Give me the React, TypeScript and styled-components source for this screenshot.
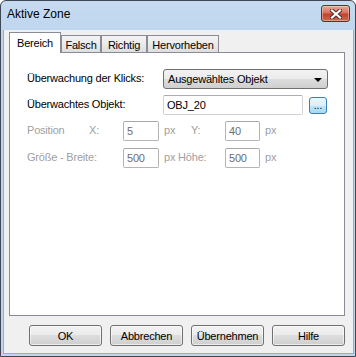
import styled, { createGlobalStyle } from 'styled-components';

const GlobalStyle = createGlobalStyle`
  body {
    margin: 0;
    background: #ffffff;
  }
  * {
    box-sizing: border-box;
  }
`;

const Window = styled.div`
  width: 356px;
  height: 357px;
  display: flex;
  flex-direction: column;
  border: 1px solid #3e4752;
  border-radius: 6px 6px 0 0;
  background: linear-gradient(#c6dbf1, #bcd4ed 40px, #bfd6ee);
  font-family: 'Liberation Sans', Arial, sans-serif;
  overflow: hidden;
`;

const TitleBar = styled.div`
  height: 29px;
  flex-shrink: 0;
  display: flex;
  justify-content: space-between;
  align-items: flex-start;
  padding: 0 5px 0 6px;
`;

const Title = styled.span`
  margin-top: 6px;
  font-size: 12px;
  line-height: 15px;
  color: #000;
`;

const CloseBtn = styled.div`
  margin-top: 4px;
  width: 29px;
  height: 17px;
  display: flex;
  align-items: center;
  justify-content: center;
  border: 1px solid #6e2a24;
  border-radius: 3px;
  background: linear-gradient(#eaa898, #d8705f 45%, #c5412c 55%, #d4674f);
  box-shadow: inset 0 0 0 1px rgba(255, 255, 255, 0.35);
`;

const Client = styled.div`
  flex: 1;
  margin: 0 1px 2px 2px;
  border: 1px solid #74bbe4;
  border-top: none;
  background: #f0f0f0;
  padding: 2px 8px 7px 5px;
  display: flex;
  flex-direction: column;
  font-size: 11px;
  letter-spacing: -0.2px;
  color: #000;
`;

const TabStrip = styled.div`
  height: 20px;
  display: flex;
  align-items: flex-end;
`;

const Tab = styled.div<{ active?: boolean; w: number }>`
  width: ${({ w }) => w}px;
  height: ${({ active }) => (active ? 21 : 17)}px;
  margin-bottom: ${({ active }) => (active ? -1 : 0)}px;
  position: relative;
  z-index: ${({ active }) => (active ? 1 : 0)};
  display: flex;
  align-items: center;
  justify-content: center;
  border: 1px solid #898c95;
  border-bottom: none;
  background: ${({ active }) =>
    active ? '#ffffff' : 'linear-gradient(#f3f3f3, #ebebeb 50%, #dedede)'};
  padding-top: ${({ active }) => (active ? 0 : 1)}px;
`;

const Panel = styled.div`
  width: 336px;
  height: 264px;
  border: 1px solid #898c95;
  background: #fff;
  padding: 16px 0 0 17px;
  display: flex;
  flex-direction: column;
`;

const Row = styled.div<{ top?: number }>`
  display: flex;
  align-items: center;
  height: 20px;
  margin-top: ${({ top }) => top ?? 0}px;
`;

const Label = styled.span<{ w: number; disabled?: boolean }>`
  width: ${({ w }) => w}px;
  flex-shrink: 0;
  color: ${({ disabled }) => (disabled ? '#a0a0a0' : '#000')};
  margin-top: -3px;
  white-space: nowrap;
`;

const Combo = styled.div`
  width: 165px;
  height: 20px;
  display: flex;
  align-items: center;
  justify-content: space-between;
  padding: 0 5px 0 4px;
  border: 1px solid #707070;
  border-radius: 3px;
  background: linear-gradient(#f2f2f2, #ebebeb 50%, #dddddd 50%, #cfcfcf);
`;

const Arrow = styled.span`
  width: 0;
  height: 0;
  border-left: 4px solid transparent;
  border-right: 4px solid transparent;
  border-top: 4px solid #000;
  margin-top: 1px;
`;

const TextBox = styled.div<{ w: number; disabled?: boolean }>`
  width: ${({ w }) => w}px;
  height: 20px;
  flex-shrink: 0;
  display: flex;
  align-items: center;
  padding-left: 3px;
  border: 1px solid ${({ disabled }) => (disabled ? '#b4b4b4' : '#cfd3d8')};
  border-top-color: ${({ disabled }) => (disabled ? '#a8a8a8' : '#abadb3')};
  border-radius: 2px;
  background: #fff;
  color: ${({ disabled }) => (disabled ? '#6d6d6d' : '#000')};
`;

const Browse = styled.div`
  width: 18px;
  height: 17px;
  margin-left: 6px;
  display: flex;
  align-items: flex-end;
  justify-content: center;
  padding-bottom: 2px;
  border: 1px solid #3c7fb1;
  border-radius: 3px;
  background: linear-gradient(#eaf6fd, #d9f0fc 50%, #bee6fd 50%, #a7d9f5);
  font-size: 10px;
  line-height: 10px;
  letter-spacing: 0;
`;

const Unit = styled.span<{ w?: number }>`
  width: ${({ w }) => (w ? `${w}px` : 'auto')};
  flex-shrink: 0;
  margin-left: 5px;
  margin-top: -3px;
  color: #a0a0a0;
  white-space: nowrap;
`;

const ButtonRow = styled.div`
  margin-top: 9px;
  display: flex;
  justify-content: flex-end;
  gap: 8px;
`;

const Button = styled.div`
  width: 73px;
  height: 21px;
  display: flex;
  align-items: center;
  justify-content: center;
  border: 1px solid #707070;
  border-radius: 3px;
  background: linear-gradient(#f2f2f2, #ebebeb 50%, #dddddd 50%, #cfcfcf);
  box-shadow: inset 0 0 0 1px rgba(255, 255, 255, 0.6);
`;

const CloseGlyph = () => (
  <svg width="12" height="10" viewBox="0 0 12 10">
    <path d="M2 1.5 L10 8.5 M10 1.5 L2 8.5" stroke="#4a2a2a" strokeWidth="4" strokeLinecap="square" />
    <path d="M2 1.5 L10 8.5 M10 1.5 L2 8.5" stroke="#ffffff" strokeWidth="2.2" strokeLinecap="square" />
  </svg>
);

const tabs = [
  { name: 'Bereich', w: 52 },
  { name: 'Falsch', w: 40 },
  { name: 'Richtig', w: 46 },
  { name: 'Hervorheben', w: 72 },
];

const buttons = ['OK', 'Abbrechen', 'Übernehmen', 'Hilfe'];

export default function App() {
  return (
    <>
      <GlobalStyle />
      <Window>
        <TitleBar>
          <Title>Aktive Zone</Title>
          <CloseBtn>
            <CloseGlyph />
          </CloseBtn>
        </TitleBar>
        <Client>
          <TabStrip>
            {tabs.map((t, i) => (
              <Tab key={t.name} w={t.w} active={i === 0}>
                {t.name}
              </Tab>
            ))}
          </TabStrip>
          <Panel>
            <Row>
              <Label w={136}>Überwachung der Klicks:</Label>
              <Combo>
                <span>Ausgewähltes Objekt</span>
                <Arrow />
              </Combo>
            </Row>
            <Row top={6}>
              <Label w={136}>Überwachtes Objekt:</Label>
              <TextBox w={140}>OBJ_20</TextBox>
              <Browse>...</Browse>
            </Row>
            <Row top={6}>
              <Label w={62} disabled>
                Position
              </Label>
              <Label w={34} disabled>
                X:
              </Label>
              <TextBox w={36} disabled>
                5
              </TextBox>
              <Unit w={27}>px</Unit>
              <Label w={34} disabled>
                Y:
              </Label>
              <TextBox w={35} disabled>
                40
              </TextBox>
              <Unit>px</Unit>
            </Row>
            <Row top={7}>
              <Label w={96} disabled>
                Größe - Breite:
              </Label>
              <TextBox w={36} disabled>
                500
              </TextBox>
              <Unit w={61}>px Höhe:</Unit>
              <TextBox w={35} disabled>
                500
              </TextBox>
              <Unit>px</Unit>
            </Row>
          </Panel>
          <ButtonRow>
            {buttons.map((b) => (
              <Button key={b}>{b}</Button>
            ))}
          </ButtonRow>
        </Client>
      </Window>
    </>
  );
}
